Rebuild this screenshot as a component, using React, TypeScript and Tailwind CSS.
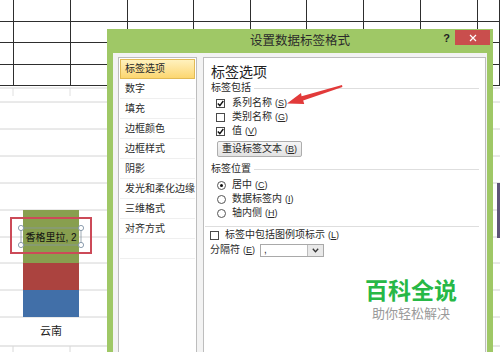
import React from 'react';

const navItems = ['标签选项', '数字', '填充', '边框颜色', '边框样式', '阴影', '发光和柔化边缘', '三维格式', '对齐方式', ''];

function Check({ on }: { on?: boolean }) {
  return (
    <span className="w-[9px] h-[9px] border border-[#4a4a4a] bg-white flex items-center justify-center shrink-0">
      {on && (
        <svg width="7" height="7" viewBox="0 0 7 7">
          <path d="M0.8 3.6 L2.8 5.6 L6.3 1" fill="none" stroke="#111" strokeWidth="1.4" />
        </svg>
      )}
    </span>
  );
}

function Radio({ on }: { on?: boolean }) {
  return (
    <span className="w-[9px] h-[9px] rounded-full border border-[#555] bg-white flex items-center justify-center shrink-0">
      {on && <span className="w-[3px] h-[3px] rounded-full bg-[#111]" />}
    </span>
  );
}

function Key({ k }: { k: string }) {
  return (
    <span className="ml-[3px] text-[9px]">
      (<span className="underline">{k}</span>)
    </span>
  );
}

function GroupLabel({ text }: { text: string }) {
  return (
    <div className="h-[14px] flex items-center pl-[7px] pr-[6px]">
      <span>{text}</span>
      <span className="flex-1 h-px bg-[#dedede] ml-[3px]" />
    </div>
  );
}

function SheetTop() {
  const cells = Array.from({ length: 40 });
  return (
    <div className="grid grid-cols-[14px_57px_57px_66px_57px_56px_57px_57px_57px_22px] grid-rows-[22px_21px_22px_21px]">
      {cells.map((_, i) => (
        <div key={i} className="border-r-[1.5px] border-b-[1.5px] border-[#2e2e2e]" />
      ))}
    </div>
  );
}

function Chart() {
  const grid = [102, 129, 156, 183, 210, 237, 263, 290, 317];
  return (
    <svg width="500" height="266" viewBox="0 86 500 266" className="block">
      <rect x="0" y="86" width="500" height="266" fill="#fff" />
      <line x1="0" y1="88" x2="500" y2="88" stroke="#d6d6d6" />
      <line x1="13" y1="88" x2="13" y2="96" stroke="#e0e0e0" />
      <line x1="70" y1="88" x2="70" y2="96" stroke="#e0e0e0" />
      {grid.map((y) => (
        <line key={y} x1="0" y1={y} x2="500" y2={y} stroke="#d4d4d4" />
      ))}
      <line x1="0" y1="346" x2="500" y2="346" stroke="#cfcfcf" />
      <line x1="13" y1="346" x2="13" y2="352" stroke="#d8d8d8" />
      <line x1="70" y1="346" x2="70" y2="352" stroke="#d8d8d8" />
      <rect x="23" y="210" width="56" height="53" fill="#889f4f" />
      <rect x="23" y="263" width="56" height="27" fill="#ab433f" />
      <rect x="23" y="290" width="56" height="27" fill="#416fa8" />
      <rect x="497" y="183" width="3" height="55" fill="#5e5478" />
      <rect x="11" y="218" width="80" height="35" fill="none" stroke="#cc4a58" strokeWidth="2" />
      <rect x="21" y="228" width="60" height="17" fill="none" stroke="#8896a4" strokeWidth="0.8" />
      {[
        [21, 228],
        [81, 228],
        [21, 245],
        [81, 245],
      ].map(([cx, cy]) => (
        <circle key={`${cx}-${cy}`} cx={cx} cy={cy} r="2.6" fill="#fff" stroke="#70859a" strokeWidth="0.8" />
      ))}
      <text x="51" y="240.5" textAnchor="middle" fontSize="10" fill="#111" fontFamily="Liberation Sans, Noto Sans CJK SC, sans-serif">
        香格里拉, 2
      </text>
      <text x="51" y="335" textAnchor="middle" fontSize="11" fill="#222" fontFamily="Liberation Sans, Noto Sans CJK SC, sans-serif">
        云南
      </text>
    </svg>
  );
}

function NavList() {
  return (
    <div className="w-[79px] bg-white border border-[#bdbdbd] p-px flex flex-col">
      {navItems.map((t, i) =>
        i === 0 ? (
          <div
            key={i}
            className="h-[20px] flex items-center pl-[4px] border border-[#e2ba55] bg-gradient-to-b from-[#fff1bd] to-[#fcd66f]"
          >
            {t}
          </div>
        ) : (
          <div key={i} className="h-[20px] flex items-center pl-[5px] border-b border-[#efefef]">
            {t}
          </div>
        )
      )}
    </div>
  );
}

function Panel() {
  return (
    <div className="flex-1 bg-white border border-[#bdbdbd] flex flex-col">
      <div className="h-[16px] mt-[6px] pl-[7px] flex items-center text-[14px] text-[#222]">标签选项</div>
      <div className="mt-px">
        <GroupLabel text="标签包括" />
      </div>
      <div className="pt-px flex flex-col">
        <div className="h-[14px] flex items-center pl-[12px] gap-[7px]">
          <Check on />
          <span>
            系列名称
            <Key k="S" />
          </span>
        </div>
        <div className="h-[14px] flex items-center pl-[12px] gap-[7px]">
          <Check />
          <span>
            类别名称
            <Key k="G" />
          </span>
        </div>
        <div className="h-[14px] flex items-center pl-[12px] gap-[7px]">
          <Check on />
          <span>
            值
            <Key k="V" />
          </span>
        </div>
      </div>
      <div className="ml-[13px] mt-[3px] w-[85px] h-[16px] border border-[#adadad] rounded-[2px] bg-gradient-to-b from-[#f6f6f6] to-[#e2e2e2] flex items-center justify-center">
        重设标签文本
        <Key k="B" />
      </div>
      <div className="mt-[5px]">
        <GroupLabel text="标签位置" />
      </div>
      <div className="mt-[2px] flex flex-col">
        <div className="h-[14px] flex items-center pl-[13px] gap-[6px]">
          <Radio on />
          <span>
            居中
            <Key k="C" />
          </span>
        </div>
        <div className="h-[14px] flex items-center pl-[13px] gap-[6px]">
          <Radio />
          <span>
            数据标签内
            <Key k="I" />
          </span>
        </div>
        <div className="h-[14px] flex items-center pl-[13px] gap-[6px]">
          <Radio />
          <span>
            轴内侧
            <Key k="H" />
          </span>
        </div>
      </div>
      <div className="mt-[6px] h-px bg-[#dedede] ml-px mr-[6px]" />
      <div className="mt-px h-[14px] flex items-center pl-[6px] gap-[6px]">
        <Check />
        <span>
          标签中包括图例项标示
          <Key k="L" />
        </span>
      </div>
      <div className="mt-px h-[14px] flex items-center pl-[6px]">
        <span className="w-[50px]">
          分隔符
          <Key k="E" />
        </span>
        <div className="w-[64px] h-[13px] border border-[#a9a9a9] flex bg-white">
          <span className="flex-1 pl-[3px] leading-[9px]">,</span>
          <span className="w-[16px] bg-[#e9e9e9] border-l border-[#bdbdbd] flex items-center justify-center">
            <svg width="7" height="5" viewBox="0 0 7 5">
              <path d="M0.8 0.8 L3.5 3.8 L6.2 0.8" fill="none" stroke="#333" strokeWidth="1.3" />
            </svg>
          </span>
        </div>
      </div>
    </div>
  );
}

export default function App() {
  return (
    <div className="relative w-[500px] h-[352px] overflow-hidden bg-white text-[10px] text-[#2a2a2a] font-['Liberation_Sans','Noto_Sans_CJK_SC',sans-serif] leading-none">
      <SheetTop />
      <Chart />

      <div className="absolute left-[107px] top-[29px] w-[386px] h-[330px] bg-[#9fc866] flex flex-col">
        <div className="h-[24px] grid grid-cols-[1fr_auto_1fr]">
          <div />
          <div className="flex items-center pt-px text-[12.5px] text-[#2b2b2b]">设置数据标签格式</div>
          <div className="flex justify-end items-start pr-[3px] gap-[5px]">
            <span className="mt-[4px] text-[11px] font-bold text-[#222]">?</span>
            <span className="mt-px w-[35px] h-[15px] bg-[#c94e4d] flex items-center justify-center">
              <svg width="8" height="8" viewBox="0 0 8 8">
                <path d="M1 1 L7 7 M7 1 L1 7" stroke="#fff" strokeWidth="1.2" />
              </svg>
            </span>
          </div>
        </div>
        <div className="flex-1 mx-[6px] bg-[#f3f3f3] flex pl-[5px] pt-[4px] pr-px gap-[6px]">
          <NavList />
          <Panel />
        </div>
      </div>

      <svg className="absolute left-0 top-0" width="500" height="352" viewBox="0 0 500 352">
        <polygon points="287,103.5 301,93 301.6,96.2 342,84.9 342.4,87 303.2,100.6 304.2,104" fill="#e23a3a" />
      </svg>

      <div className="absolute left-[363px] top-[279px] w-[96px] flex flex-col items-center">
        <span className="h-[25px] flex items-center text-[23px] font-bold text-[#27b846]">百科全说</span>
        <span className="mt-px h-[16px] flex items-center text-[13px] text-[#9a9a9a]">助你轻松解决</span>
      </div>
    </div>
  );
}
